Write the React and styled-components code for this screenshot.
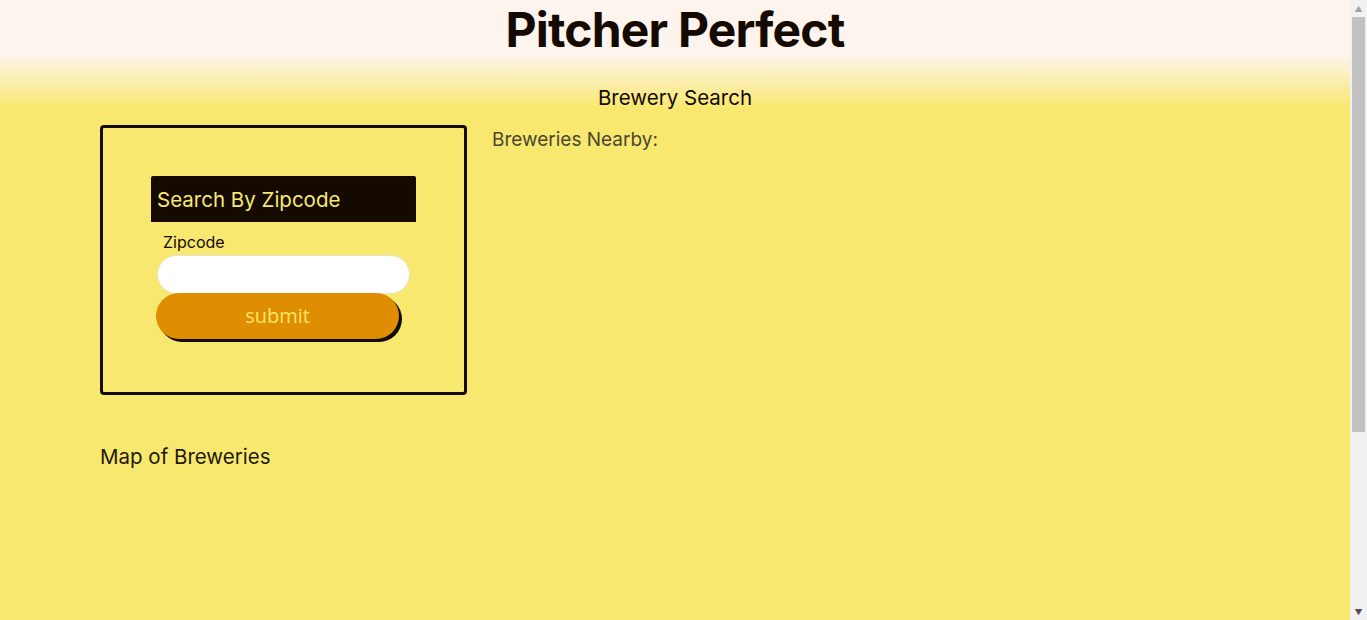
import React, { useState } from "react";
import styled, { createGlobalStyle } from "styled-components";

const GlobalStyle = createGlobalStyle`
    html, body {
        margin: 0;
        padding: 0;
    }
    body {
        font-family: "Inter", "Noto Sans", sans-serif;
        background: linear-gradient(to bottom, #fdf4ed 0px, #fdf4ed 55px, #f9e86f 108px, #f9e86f 100%);
        background-color: #f9e86f;
        color: #140a00;
        padding-right: 17px;
    }
`;

const Page = styled.div`
    min-height: 880px;
    display: flex;
    flex-direction: column;
`;

/* stand-in for the browser scrollbar seen in the screenshot */
const ScrollTrack = styled.div`
    position: fixed;
    top: 0;
    right: 0;
    width: 17px;
    height: 100vh;
    background: #f1f1f1;
    display: flex;
    flex-direction: column;
    align-items: center;
`;

const Arrow = styled.div`
    height: 17px;
    display: flex;
    align-items: center;
    justify-content: center;
    font-size: 8px;
    color: ${(p) => (p.$dim ? "#a3a3a3" : "#505050")};
`;

const Thumb = styled.div`
    width: 13px;
    height: 415px;
    background: #c1c1c1;
`;

const Spacer = styled.div`
    flex: 1;
`;

const Title = styled.h1`
    margin: 0;
    padding-top: 2px;
    font-size: 48px;
    line-height: 56px;
    font-weight: 700;
    text-align: center;
    letter-spacing: -0.8px;
    color: #140a00;
`;

const Subtitle = styled.h2`
    margin: 27px 0 0;
    font-size: 20.5px;
    line-height: 26px;
    font-weight: 400;
    text-align: center;
    color: #140a00;
`;

const Main = styled.div`
    display: flex;
    flex-direction: column;
    padding: 0 100px;
    margin-top: 14px;
`;

const Row = styled.div`
    display: flex;
    flex-direction: row;
    align-items: flex-start;
    gap: 25px;
`;

const SearchBox = styled.form`
    width: 367px;
    box-sizing: border-box;
    border: 3px solid #140a00;
    border-radius: 4px;
    padding: 48px 0 53px 48px;
    display: flex;
    flex-direction: column;
    align-items: flex-start;
`;

const SearchHeader = styled.div`
    width: 259px;
    height: 46px;
    background: #140a00;
    color: #f9e86f;
    font-size: 20.5px;
    line-height: 48px;
    padding-left: 6px;
    border-radius: 2px 2px 0 0;
`;

const Label = styled.label`
    font-size: 16px;
    line-height: 20px;
    margin: 10px 0 3px 12px;
`;

const Input = styled.input`
    box-sizing: border-box;
    width: 253px;
    height: 39px;
    margin-left: 6px;
    border: 1px solid #e8e2c8;
    border-radius: 20px;
    background: #ffffff;
    outline: none;
    padding: 0 14px;
    font-size: 16px;
`;

const Submit = styled.button`
    width: 243px;
    height: 46px;
    margin: -1px 0 0 5px;
    padding: 0 0 2px;
    border: none;
    border-radius: 23px;
    background: #df8e02;
    color: #fde567;
    font-family: "Open Sans", "Noto Sans", sans-serif;
    font-size: 20px;
    box-shadow: 3px 3px 0 #140a00;
    cursor: pointer;
`;

const Nearby = styled.div`
    margin-top: 2px;
    font-size: 19px;
    line-height: 26px;
    color: #4b4630;
`;

const MapTitle = styled.h3`
    margin: 48px 0 0;
    font-size: 20.5px;
    line-height: 28px;
    font-weight: 400;
    color: #1e1a08;
`;

const MapArea = styled.div`
    height: 380px;
`;

export default function App() {
    const [zip, setZip] = useState("");
    return (
        <Page>
            <GlobalStyle />
            <Title>Pitcher Perfect</Title>
            <Subtitle>Brewery Search</Subtitle>
            <Main>
                <Row>
                    <SearchBox onSubmit={(e) => e.preventDefault()}>
                        <SearchHeader>Search By Zipcode</SearchHeader>
                        <Label htmlFor="zip">Zipcode</Label>
                        <Input id="zip" value={zip} onChange={(e) => setZip(e.target.value)} />
                        <Submit type="submit">submit</Submit>
                    </SearchBox>
                    <Nearby>Breweries Nearby:</Nearby>
                </Row>
                <MapTitle>Map of Breweries</MapTitle>
                <MapArea />
            </Main>
            <ScrollTrack>
                <Arrow $dim>▲</Arrow>
                <Thumb />
                <Spacer />
                <Arrow>▼</Arrow>
            </ScrollTrack>
        </Page>
    );
}
